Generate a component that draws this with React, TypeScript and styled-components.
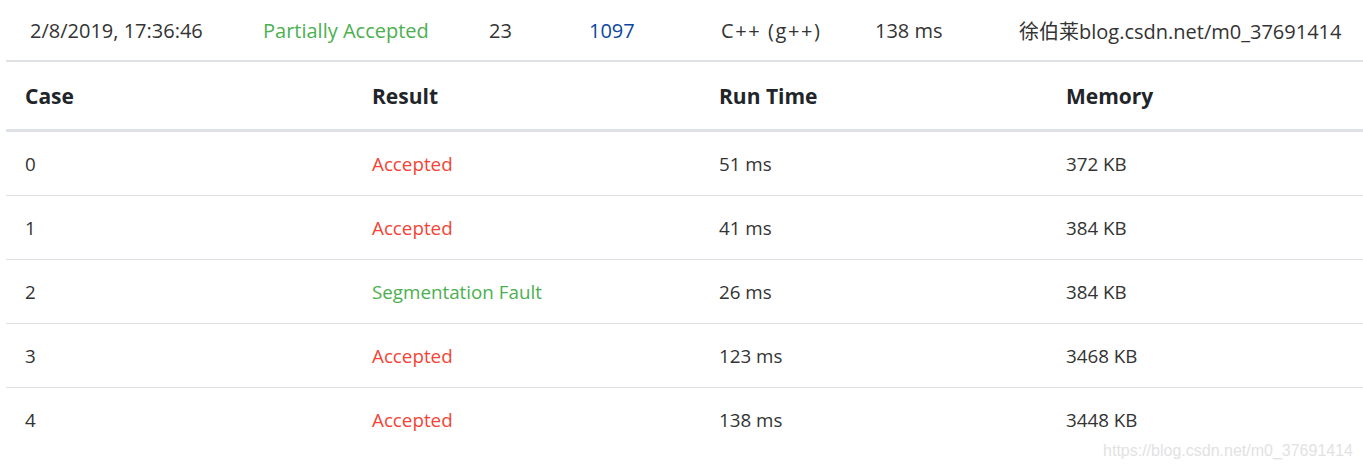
import React from 'react';
import styled, { createGlobalStyle } from 'styled-components';

const GlobalStyle = createGlobalStyle`
  html, body {
    margin: 0;
    padding: 0;
    background: #fff;
  }
  body {
    font-family: 'Open Sans', 'Noto Sans CJK SC', sans-serif;
    color: #212529;
  }
`;

const Page = styled.div`
  position: relative;
  width: 1363px;
  height: 469px;
  overflow: hidden;
`;

const SubmissionRow = styled.div`
  display: grid;
  grid-template-columns: 233px 226px 100px 132px 154px 144px auto;
  align-items: center;
  height: 60px;
  padding-left: 30px;
  font-size: 20px;
  color: #333;
  white-space: nowrap;
`;

type Tone = 'green' | 'red' | 'blue' | 'plain';

const toneColor: Record<Tone, string> = {
  green: '#4caf50',
  red: '#f44336',
  blue: '#0d47a1',
  plain: 'inherit',
};

const Cell = styled.span<{ tone?: Tone; spaced?: boolean }>`
  color: ${({ tone = 'plain' }) => toneColor[tone]};
  letter-spacing: ${({ spaced }) => (spaced ? '1.6px' : 'normal')};
`;

const Table = styled.div`
  margin-left: 6px;
  width: 1388px;
  border-top: 2px solid #dee2e6;
`;

const HeadRow = styled.div`
  display: grid;
  grid-template-columns: repeat(4, 347px);
  align-items: center;
  height: 67px;
  border-bottom: 2px solid #dee2e6;
  font-size: 21px;
  font-weight: 700;
  color: #212529;
`;

const BodyRow = styled.div`
  display: grid;
  grid-template-columns: repeat(4, 347px);
  align-items: center;
  height: 63px;
  border-top: 1px solid #dee2e6;
  font-size: 18.8px;
  color: #333;
`;

const Col = styled.div<{ tone?: Tone }>`
  padding-left: 19px;
  color: ${({ tone = 'plain' }) => toneColor[tone]};
`;

const Watermark = styled.div`
  position: absolute;
  right: 10px;
  bottom: 9px;
  font-family: 'Liberation Sans', Arial, sans-serif;
  font-size: 16px;
  color: #e2e2e2;
`;

interface CaseResult {
  id: number;
  result: string;
  ok: boolean;
  time: number;
  memory: number;
}

const cases: CaseResult[] = [
  { id: 0, result: 'Accepted', ok: true, time: 51, memory: 372 },
  { id: 1, result: 'Accepted', ok: true, time: 41, memory: 384 },
  { id: 2, result: 'Segmentation Fault', ok: false, time: 26, memory: 384 },
  { id: 3, result: 'Accepted', ok: true, time: 123, memory: 3468 },
  { id: 4, result: 'Accepted', ok: true, time: 138, memory: 3448 },
];

const App = () => (
  <Page>
    <GlobalStyle />
    <SubmissionRow>
      <Cell>2/8/2019, 17:36:46</Cell>
      <Cell tone="green">Partially Accepted</Cell>
      <Cell>23</Cell>
      <Cell tone="blue">1097</Cell>
      <Cell spaced>C++ (g++)</Cell>
      <Cell>138 ms</Cell>
      <Cell>徐伯莱blog.csdn.net/m0_37691414</Cell>
    </SubmissionRow>
    <Table>
      <HeadRow>
        <Col>Case</Col>
        <Col>Result</Col>
        <Col>Run Time</Col>
        <Col>Memory</Col>
      </HeadRow>
      {cases.map((c) => (
        <BodyRow key={c.id}>
          <Col>{c.id}</Col>
          {/* colours are swapped on the original page: accepted shows red */}
          <Col tone={c.ok ? 'red' : 'green'}>{c.result}</Col>
          <Col>{c.time} ms</Col>
          <Col>{c.memory} KB</Col>
        </BodyRow>
      ))}
    </Table>
    <Watermark>https://blog.csdn.net/m0_37691414</Watermark>
  </Page>
);

export default App;
